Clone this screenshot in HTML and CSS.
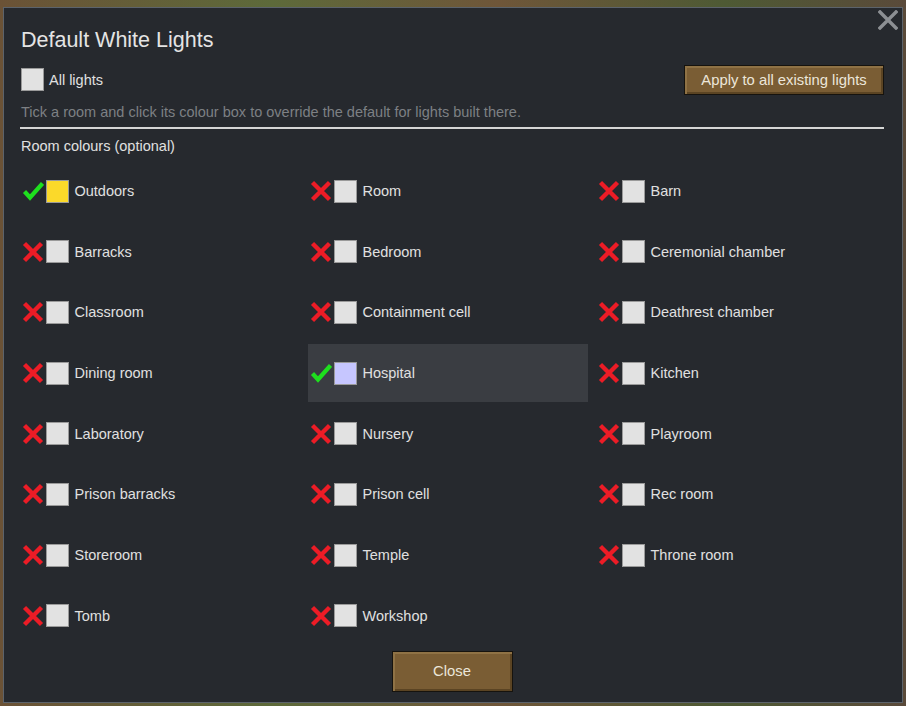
FILE: index.html
```html
<!DOCTYPE html>
<html lang="en">
<head>
  <meta charset="UTF-8" />
  <title>Default White Lights</title>
  <link rel="stylesheet" href="styles.css">
</head>
<body>
  <div class="window">
    <button class="close-x" aria-label="Close">
      <svg width="20" height="20" viewBox="0 0 20 20">
        <path d="M2 2 L18 18 M18 2 L2 18" stroke="#8c8f93" stroke-width="3.4" stroke-linecap="square" fill="none"/>
      </svg>
    </button>

    <h1>Default White Lights</h1>

    <div class="top-row">
      <label class="all-lights">
        <span class="swatch"></span>
        All lights
      </label>
      <button class="btn apply">Apply to all existing lights</button>
    </div>

    <p class="hint">Tick a room and click its colour box to override the default for lights built there.</p>
    <hr class="rule">
    <p class="section">Room colours (optional)</p>

    <div class="rooms" id="rooms"></div>

    <div class="footer">
      <button class="btn close">Close</button>
    </div>
  </div>

  <script>
    // room name, overridden?, colour of the box, hovered?
    var rooms = [
      ["Outdoors", true, "#fbd92a"], ["Room"], ["Barn"],
      ["Barracks"], ["Bedroom"], ["Ceremonial chamber"],
      ["Classroom"], ["Containment cell"], ["Deathrest chamber"],
      ["Dining room"], ["Hospital", true, "#c6c6ff", true], ["Kitchen"],
      ["Laboratory"], ["Nursery"], ["Playroom"],
      ["Prison barracks"], ["Prison cell"], ["Rec room"],
      ["Storeroom"], ["Temple"], ["Throne room"],
      ["Tomb"], ["Workshop"]
    ];

    var tick = '<svg width="22" height="22" viewBox="0 0 22 22"><path d="M2.5 11.5 L8 17.5 L20.5 3.5" stroke="#1ee01e" stroke-width="4.2" fill="none" stroke-linejoin="miter"/></svg>';
    var cross = '<svg width="22" height="22" viewBox="0 0 22 22"><path d="M2.5 2.5 L19.5 19.5 M19.5 2.5 L2.5 19.5" stroke="#ec1c26" stroke-width="4.4" fill="none"/></svg>';

    var html = "";
    rooms.forEach(function (r) {
      var on = r[1] === true;
      var cls = "room" + (r[3] ? " hover" : "");
      var style = r[2] ? ' style="background:' + r[2] + '"' : "";
      html += '<div class="' + cls + '">' +
        '<span class="mark">' + (on ? tick : cross) + '</span>' +
        '<span class="swatch"' + style + '></span>' +
        '<span class="name">' + r[0] + '</span></div>';
    });
    document.getElementById("rooms").innerHTML = html;
  </script>
</body>
</html>
```

FILE: styles.css
```css
* {
  box-sizing: border-box;
  margin: 0;
  padding: 0;
}

html, body {
  width: 906px;
  height: 706px;
  overflow: hidden;
}

body {
  font-family: "Liberation Sans", Arial, sans-serif;
  font-size: 14.5px;
  color: #e0e0e0;
  background: linear-gradient(90deg, #6b5236 0%, #5d6a3a 30%, #6f5639 55%, #4e5a34 80%, #5a4a3a 100%);
  padding: 7px 3px 3px 3px;
}

.window {
  position: relative;
  width: 900px;
  height: 696px;
  background: #26292e;
  border: 1px solid #5c636b;
  padding: 0 18px 0 16px;
  display: flex;
  flex-direction: column;
}

.close-x {
  position: absolute;
  top: 2px;
  right: 4px;
  width: 20px;
  height: 20px;
  background: none;
  border: none;
  cursor: pointer;
}

.close-x svg {
  display: block;
}

h1 {
  font-size: 21.5px;
  font-weight: normal;
  line-height: 26px;
  margin-top: 19px;
  margin-left: 1px;
  color: #e4e4e4;
}

.top-row {
  margin-top: 12px;
  height: 29px;
  display: flex;
  align-items: center;
  justify-content: space-between;
}

.all-lights {
  display: flex;
  align-items: center;
  gap: 5px;
  margin-left: 1px;
}

.swatch {
  display: inline-block;
  width: 23px;
  height: 23px;
  background: #e2e2e2;
  border: 1px solid #9a9a9a;
  flex: none;
}

.btn {
  font-family: "Liberation Sans", Arial, sans-serif;
  font-size: 14.8px;
  color: #ece6da;
  background: #7a5d34;
  border: 1px solid #16130e;
  box-shadow: inset 2px 2px 0 #8f7245, inset -2px -2px 0 #5b4423;
  cursor: pointer;
}

.apply {
  width: 200px;
  height: 30px;
}

.hint {
  margin-top: 9px;
  margin-left: 1px;
  line-height: 18px;
  color: #7d8084;
}

.rule {
  margin-top: 6px;
  border: none;
  height: 2px;
  background: #d6d6d6;
}

.section {
  margin-top: 8px;
  margin-left: 1px;
  line-height: 18px;
}

.rooms {
  margin-top: 7px;
  display: grid;
  grid-template-columns: repeat(3, 280px);
  column-gap: 8px;
  grid-auto-rows: 58px;
  row-gap: 2.7px;
}

.room {
  display: flex;
  align-items: center;
  padding-left: 2px;
}

.room.hover {
  background: #3a3d42;
}

.mark {
  width: 22px;
  height: 22px;
  flex: none;
}

.mark svg {
  display: block;
}

.room .swatch {
  margin-left: 2px;
}

.name {
  margin-left: 5.5px;
}

.footer {
  margin-top: 6px;
  display: flex;
  justify-content: center;
}

.close {
  width: 121px;
  height: 41px;
}
```
